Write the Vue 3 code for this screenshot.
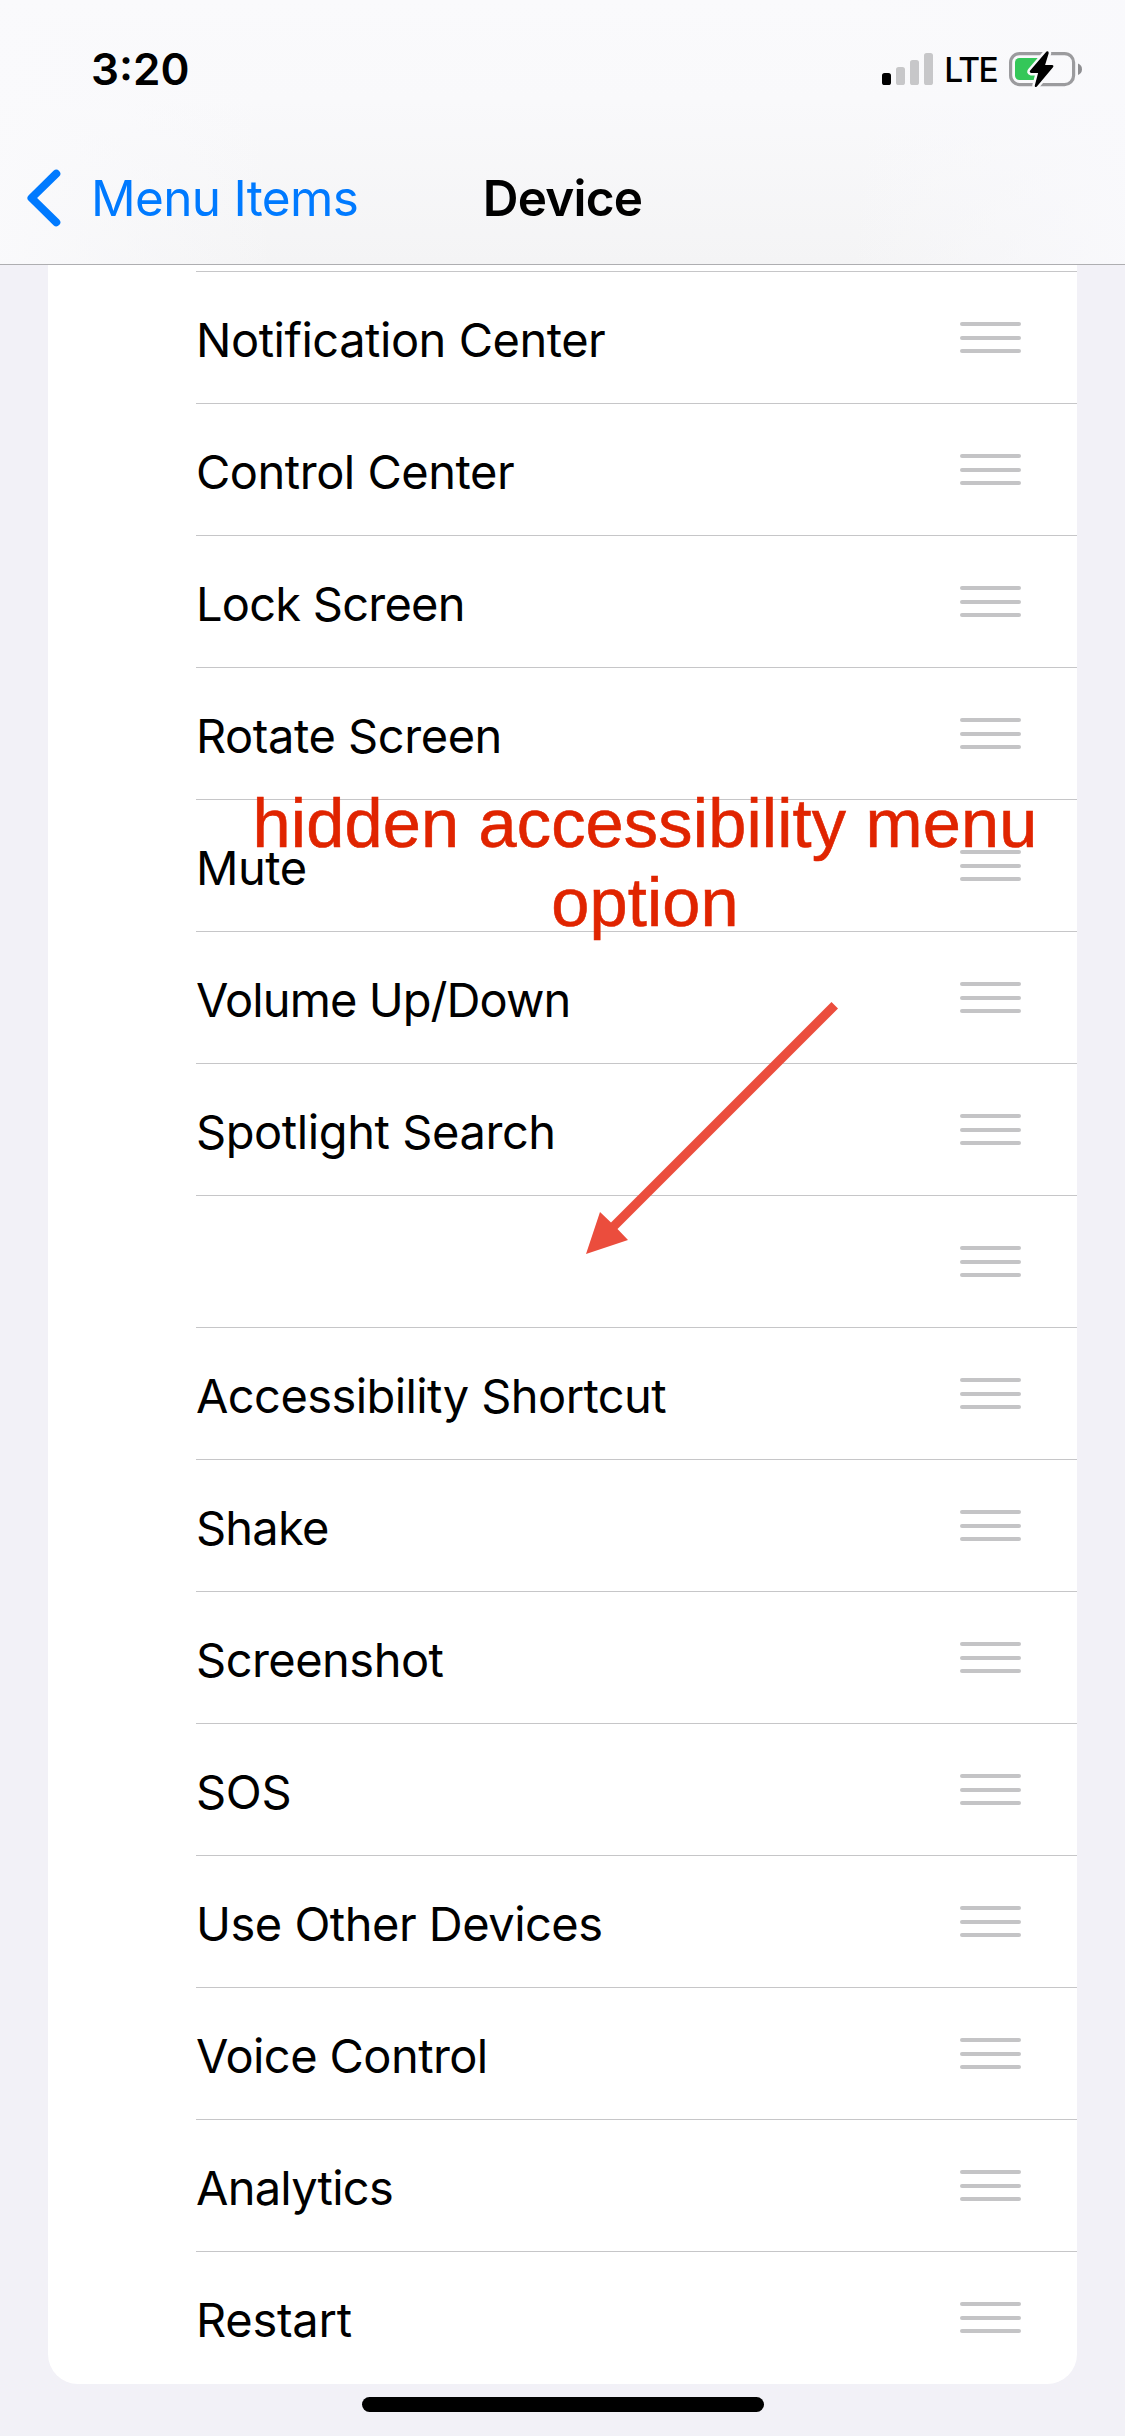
<script setup>
const items = [
  { label: 'Notification Center', spacing: -0.47 },
  { label: 'Control Center', spacing: -0.48 },
  { label: 'Lock Screen', spacing: -0.76 },
  { label: 'Rotate Screen', spacing: -0.45 },
  { label: 'Mute', spacing: -0.5 },
  { label: 'Volume Up/Down', spacing: -0.93 },
  { label: 'Spotlight Search', spacing: -0.42 },
  { label: '', spacing: 0 },
  { label: 'Accessibility Shortcut', spacing: -0.58 },
  { label: 'Shake', spacing: -0.8 },
  { label: 'Screenshot', spacing: -0.52 },
  { label: 'SOS', spacing: -0.3 },
  { label: 'Use Other Devices', spacing: -0.5 },
  { label: 'Voice Control', spacing: -0.58 },
  { label: 'Analytics', spacing: -0.75 },
  { label: 'Restart', spacing: -0.25 },
]
</script>

<template>
  <div class="screen">
    <header class="header">
      <div class="status">
        <span class="time">3:20</span>
        <div class="indicators">
          <svg class="signal" width="51" height="32" viewBox="0 0 51 32">
            <rect x="0" y="20" width="9" height="12" rx="2.6" fill="#000" />
            <rect x="14" y="14" width="9" height="18" rx="2.6" fill="#c7c7c9" />
            <rect x="28" y="7" width="9" height="25" rx="2.6" fill="#c7c7c9" />
            <rect x="42" y="0" width="9" height="32" rx="2.6" fill="#c7c7c9" />
          </svg>
          <span class="network">LTE</span>
          <svg class="battery" width="74" height="38" viewBox="0 0 74 38">
            <rect x="1.6" y="3.6" width="63" height="31" rx="9" fill="none" stroke="#9b9b9e" stroke-width="3.2" />
            <rect x="6" y="8" width="28" height="22" rx="4.5" fill="#34c759" />
            <path d="M69 13.5c2.6 1 4 3 4 5.8s-1.4 4.800-4 5.800z" fill="#8e8e91" />
            <path
              d="M37.500 1.500 21.200 20.600q-1.300 2 .9 2.300h7L25.800 35.400q-.2 2.600 2.100 1L44 17.200q1.200-2-1-2.300h-6.900L39.700 3.200q.1-2.800-2.200-1.700z"
              fill="#000" stroke="#f9f9fb" stroke-width="5" stroke-linejoin="round" paint-order="stroke"
            />
          </svg>
        </div>
      </div>
      <nav class="nav">
        <div class="back">
          <svg width="34" height="58" viewBox="0 0 34 58">
            <path d="M29.300 4.700 4.500 29l24.800 24.300" fill="none" stroke="#007aff" stroke-width="8" stroke-linecap="round" stroke-linejoin="round" />
          </svg>
          <span>Menu Items</span>
        </div>
        <h1>Device</h1>
      </nav>
    </header>

    <main class="list">
      <div v-for="(item, i) in items" :key="i" class="row">
        <div class="cell">
          <span class="label" :style="{ letterSpacing: item.spacing + 'px' }">{{ item.label }}</span>
          <div class="handle"><i></i><i></i><i></i></div>
        </div>
      </div>
    </main>

    <footer class="footer"><div class="home"></div></footer>

    <p class="note"><span>hidden accessibility menu</span><span>option</span></p>
    <svg class="arrow" width="252" height="252" viewBox="0 0 252 252">
      <path d="M0 252 14 210l11 10.500L245.500 0l6.500 6.500L31.500 227l10.500 11z" fill="#eb4d3d" />
    </svg>
  </div>
</template>

<style>
body {
  margin: 0;
  background: #f2f1f7;
}
</style>

<style scoped>
.screen {
  position: relative;
  display: flex;
  flex-direction: column;
  width: 1125px;
  height: 2436px;
  overflow: hidden;
  background: #f2f1f7;
  color: #000;
  font-family: Inter, "Liberation Sans", sans-serif;
}
.header {
  box-sizing: border-box;
  height: 265px;
  border-bottom: 1px solid #aeaeb1;
  background:
    linear-gradient(90deg, rgba(250, 250, 252, 0.9), rgba(250, 250, 252, 0) 25%, rgba(250, 250, 252, 0) 75%, rgba(249, 249, 252, 0.9)),
    linear-gradient(#fafafc 0, #f9f9fb 100px, #f4f4f5 264px);
}
.status {
  display: flex;
  justify-content: space-between;
  align-items: center;
  box-sizing: border-box;
  height: 138px;
  padding: 0 42px 0 91px;
}
.time {
  font-size: 44px;
  font-weight: 600;
  line-height: 54px;
}
.indicators {
  display: flex;
  align-items: center;
}
.network {
  margin: 2px 12px 0 11px;
  font-size: 33.500px;
  font-weight: 500;
  line-height: 40px;
  letter-spacing: -1.700px;
}
.nav {
  display: grid;
  grid-template-columns: 1fr auto 1fr;
  align-items: center;
  height: 120px;
  padding: 0 27px;
}
.back {
  display: flex;
  align-items: center;
  gap: 30px;
  color: #007aff;
  font-size: 49.500px;
  line-height: 60px;
  letter-spacing: -0.700px;
  white-space: nowrap;
}
h1 {
  margin: 0;
  font-size: 49.500px;
  font-weight: 600;
  line-height: 60px;
  letter-spacing: -0.800px;
}
.list {
  box-sizing: border-box;
  height: 2119px;
  margin: 0 48px;
  padding-left: 148px;
  border-radius: 0 0 30px 30px;
  background: #fff;
}
.list::before {
  content: "";
  display: block;
  height: 6px;
  border-bottom: 1px solid #c6c6c8;
}
.row {
  box-sizing: border-box;
  height: 132px;
  border-bottom: 1px solid #c6c6c8;
}
.row:last-child {
  border-bottom: 0;
}
.cell {
  display: flex;
  justify-content: space-between;
  align-items: center;
  height: 131px;
  padding-right: 56px;
}
.label {
  margin-top: 5px;
  font-size: 47px;
  line-height: 58px;
  white-space: nowrap;
}
.handle {
  display: flex;
  flex-direction: column;
  justify-content: space-between;
  width: 61px;
  height: 31px;
}
.handle i {
  height: 4px;
  border-radius: 2px;
  background: #c4c4c6;
}
.footer {
  display: flex;
  justify-content: center;
  padding-top: 13px;
}
.home {
  width: 402px;
  height: 15px;
  border-radius: 8px;
  background: #000;
}
.note {
  position: absolute;
  top: 784px;
  left: 245px;
  display: flex;
  flex-direction: column;
  align-items: center;
  width: 800px;
  margin: 0;
  color: #e02400;
  font-family: "Liberation Sans", Arial, sans-serif;
  font-size: 68.500px;
  line-height: 79px;
  letter-spacing: 0.180px;
  white-space: nowrap;
  -webkit-text-stroke: 0.600px #e02400;
}
.arrow {
  position: absolute;
  top: 1002px;
  left: 586px;
}
</style>
